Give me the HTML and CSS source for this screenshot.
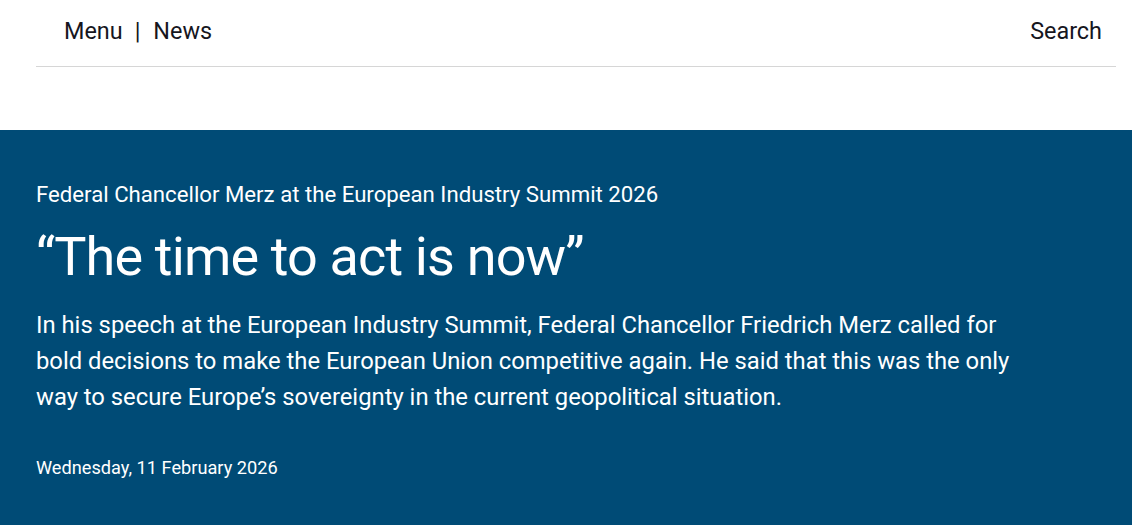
FILE: index.html
```
<!DOCTYPE html>
<html lang="en">
<head>
<meta charset="utf-8">
<title>The time to act is now</title>
<link rel="stylesheet" href="styles.css">
</head>
<body>
<header class="site-header">
  <nav class="nav">
    <div class="nav-left">
      <a class="nav-link" href="#">Menu</a>
      <span class="nav-sep">|</span>
      <a class="nav-link" href="#">News</a>
    </div>
    <a class="nav-link" href="#">Search</a>
  </nav>
</header>
<main>
  <section class="hero">
    <p class="kicker">Federal Chancellor Merz at the European Industry Summit 2026</p>
    <h1 class="title">“The time to act is now”</h1>
    <p class="lead">In his speech at the European Industry Summit, Federal Chancellor Friedrich Merz called for bold decisions to make the European Union competitive again. He said that this was the only way to secure Europe’s sovereignty in the current geopolitical situation.</p>
    <p class="date">Wednesday, 11 February 2026</p>
  </section>
</main>
</body>
</html>
```
FILE: styles.css
```
html, body {
  margin: 0;
  padding: 0;
  background: #ffffff;
}
body {
  font-family: Roboto, "Liberation Sans", sans-serif;
}
.site-header {
  padding: 0 16px 0 36px;
}
.nav {
  display: flex;
  justify-content: space-between;
  align-items: center;
  padding: 16px 14px 20px 28px;
  border-bottom: 1px solid #d6d6d6;
  margin-bottom: 63px;
}
.nav-left {
  display: flex;
  align-items: center;
}
.nav-link {
  color: #16161e;
  text-decoration: none;
  font-size: 23.4px;
  line-height: 30px;
}
.nav-sep {
  color: #16161e;
  font-size: 23.4px;
  line-height: 30px;
  margin: 0 13px 0 12px;
}
.hero {
  background: #004b76;
  color: #ffffff;
  padding: 50px 36px 60px;
  min-height: 300px;
}
.kicker {
  margin: 0;
  font-size: 22.2px;
  line-height: 28px;
}
.title {
  margin: 17px 0 0;
  font-weight: 400;
  font-size: 54px;
  line-height: 64px;
  letter-spacing: -0.85px;
}
.lead {
  margin: 18px 0 0;
  max-width: 990px;
  font-size: 23.8px;
  line-height: 36px;
}
.date {
  margin: 41px 0 0;
  font-size: 18.2px;
  line-height: 24px;
}
```
